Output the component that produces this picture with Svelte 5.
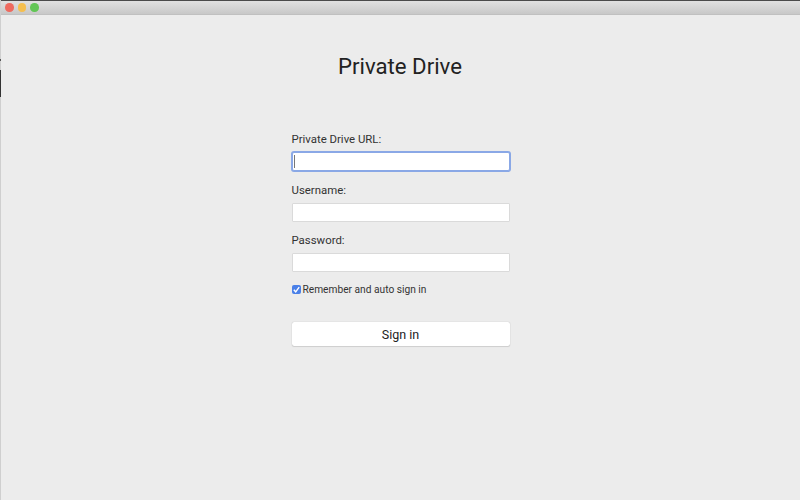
<script lang="ts">
	let remember = $state(true);
	const fields = [
		{ id: 'url', label: 'Private Drive URL:', type: 'text' },
		{ id: 'username', label: 'Username:', type: 'text' },
		{ id: 'password', label: 'Password:', type: 'password' }
	];
</script>

<div class="desktop">
	<div class="edge">
		<span class="edge-tick"></span>
		<span class="edge-bar"></span>
	</div>
	<div class="window">
		<header class="titlebar">
			<span class="light red"></span>
			<span class="light yellow"></span>
			<span class="light green"></span>
		</header>
		<main class="content">
			<h1>Private Drive</h1>
			<form onsubmit={(e) => e.preventDefault()}>
				{#each fields as field, i}
					<label class="field" for={field.id}>{field.label}</label>
					<div class="input-wrap">
						<input id={field.id} type={field.type} class:focused={i === 0} />
						{#if i === 0}
							<span class="caret"></span>
						{/if}
					</div>
				{/each}
				<label class="remember">
					<input type="checkbox" bind:checked={remember} />
					<span class="box">
						{#if remember}
							<svg viewBox="0 0 9 9" width="9" height="9">
								<path d="M1.8 4.8 L3.7 6.8 L7.2 2.2" fill="none" stroke="#fff" stroke-width="1.4" />
							</svg>
						{/if}
					</span>
					Remember and auto sign in
				</label>
				<button type="submit">Sign in</button>
			</form>
		</main>
	</div>
</div>

<style>
	:global(body) {
		background: #ececec;
	}

	.desktop {
		display: flex;
		width: 800px;
		height: 500px;
		overflow: hidden;
		font-family: Roboto, "Liberation Sans", sans-serif;
		color: #333;
	}

	.edge {
		display: flex;
		flex-direction: column;
		flex: none;
		width: 1px;
		padding-top: 59px;
		background: #cfcfcf;
	}

	.edge-tick {
		height: 2px;
		background: #555;
	}

	.edge-bar {
		height: 27px;
		margin-top: 9px;
		background: #333;
	}

	.window {
		display: flex;
		flex-direction: column;
		flex: 1;
		background: #ececec;
	}

	.titlebar {
		display: flex;
		align-items: center;
		gap: 4px;
		flex: none;
		box-sizing: border-box;
		height: 15px;
		padding: 0 0 0 4.25px;
		background: linear-gradient(#e0e0e0, #c8c8c8);
		border-top: 1px solid #4a4a4a;
		border-bottom: 1px solid #c0c0c0;
	}

	.light {
		width: 8.5px;
		height: 8.5px;
		border-radius: 50%;
	}

	.red {
		background: #ee6a5f;
	}

	.yellow {
		background: #f5bf4f;
	}

	.green {
		background: #62c655;
	}

	.content {
		display: flex;
		flex-direction: column;
		align-items: center;
		padding-right: 1px;
	}

	h1 {
		margin: 36px 0 0;
		font-size: 22.2px;
		line-height: 30px;
		font-weight: 400;
		color: #222;
	}

	form {
		display: flex;
		flex-direction: column;
		width: 218px;
		margin-top: 50px;
		margin-left: 1px;
	}

	.field {
		font-size: 11.4px;
		line-height: 16px;
		margin-bottom: 5px;
	}

	.input-wrap {
		position: relative;
		margin-bottom: 10.5px;
	}

	.input-wrap input {
		display: block;
		box-sizing: border-box;
		width: 100%;
		height: 19px;
		padding: 0 3px;
		background: #fff;
		border: 1px solid #dadada;
		border-radius: 1px;
		outline: none;
	}

	.input-wrap input.focused {
		border: 1px solid #8aa8e6;
		box-shadow: 0 0 0 1px #8aa8e6;
		border-radius: 2px;
	}

	.caret {
		position: absolute;
		left: 2.5px;
		top: 3px;
		width: 1px;
		height: 13px;
		background: #777;
	}

	.remember {
		display: flex;
		align-items: center;
		gap: 2px;
		font-size: 10.2px;
		line-height: 14px;
	}

	.remember input {
		display: none;
	}

	.box {
		display: flex;
		align-items: center;
		justify-content: center;
		width: 9px;
		height: 9px;
		background: #4a80e8;
		border-radius: 2px;
	}

	button {
		height: 24px;
		margin-top: 25.5px;
		padding: 0;
		font-family: inherit;
		font-size: 12.5px;
		color: #222;
		background: #fff;
		border: none;
		border-radius: 2px;
		box-shadow: 0 0 1px rgba(0, 0, 0, 0.3), 0 1px 1px rgba(0, 0, 0, 0.1);
	}
</style>
